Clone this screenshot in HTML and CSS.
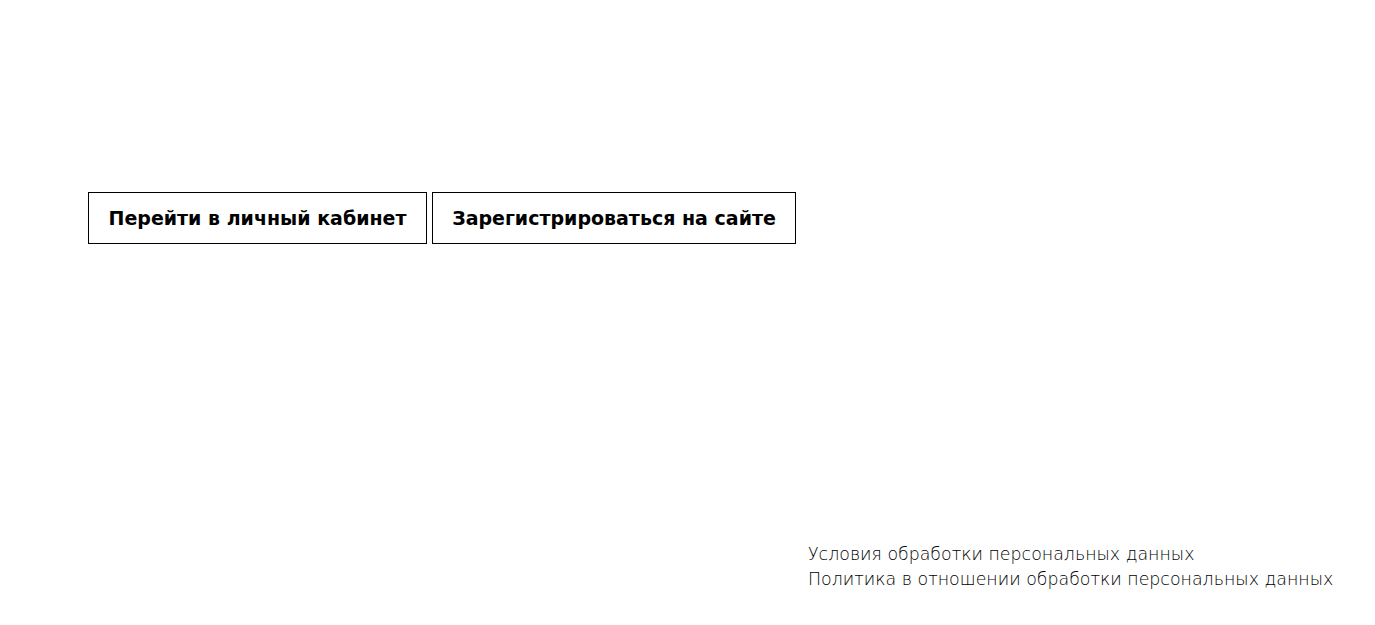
FILE: index.html
```html
<!DOCTYPE html>
<html lang="ru">
<head>
<meta charset="utf-8">
<link rel="stylesheet" href="styles.css">
<title>Кабинет</title>
</head>
<body>
<div class="page">
  <div class="actions">
    <a class="btn btn-login" href="#">Перейти в личный кабинет</a>
    <a class="btn btn-register" href="#">Зарегистрироваться на сайте</a>
  </div>
  <div class="legal">
    <a class="legal-link" href="#">Условия обработки персональных данных</a>
    <a class="legal-link" href="#">Политика в отношении обработки персональных данных</a>
  </div>
</div>
</body>
</html>
```
FILE: styles.css
```css
* { box-sizing: border-box; }
html, body { margin: 0; padding: 0; background: #fff; }
body { font-family: "DejaVu Sans", "Noto Sans", sans-serif; color: #000; }
.page {
  width: 1375px;
  height: 625px;
  display: flex;
  flex-direction: column;
  padding: 192px 0 0 88px;
}
.actions {
  display: flex;
  gap: 5px;
}
.btn {
  display: flex;
  align-items: center;
  justify-content: center;
  height: 52px;
  border: 1px solid #000;
  color: #000;
  text-decoration: none;
  font-weight: bold;
  font-size: 19px;
}
.btn-login { width: 339px; }
.btn-register { width: 364px; }
.legal {
  margin-top: 298px;
  margin-left: 720px;
  display: flex;
  flex-direction: column;
}
.legal-link {
  color: #000;
  text-decoration: none;
  font-size: 17.4px;
  font-weight: 300;
  line-height: 25px;
}
```
